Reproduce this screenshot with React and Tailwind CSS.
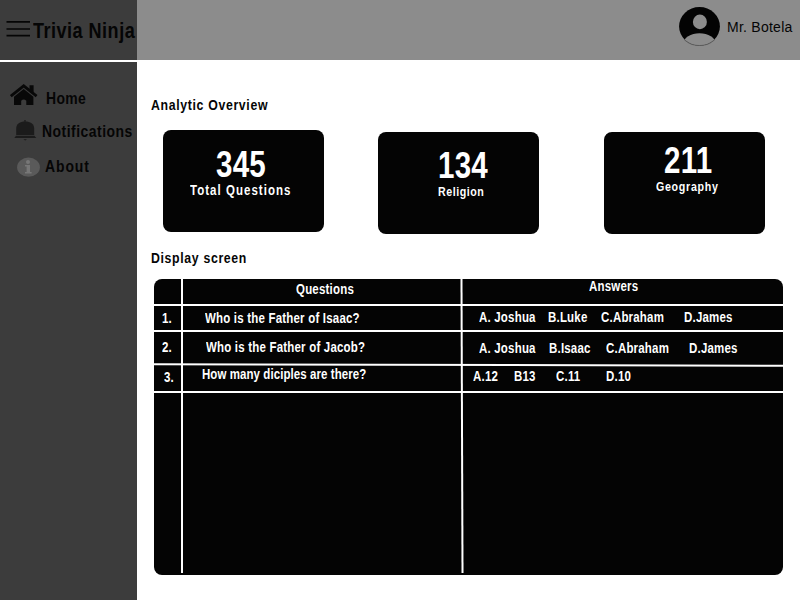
const Menu = () => (
  <svg className="block h-[18px] w-[25px] shrink-0" viewBox="0 0 25 18" stroke="#050505" strokeWidth="1.7">
    <path d="M0.5 1.8H24M0.5 9H24M0.5 15.7H24" />
  </svg>
);

const House = () => (
  <svg className="block h-[22px] w-[28px] shrink-0" viewBox="0 0 28 22">
    <path d="M0.8 12.2L13.7 1.8L26.6 12.2" fill="none" stroke="#080808" strokeWidth="2.8" />
    <path d="M19.5 1.2H23.6v9L19.5 6.5z" fill="#080808" />
    <path d="M4 12.8L13.7 5L23.4 12.8V21H16.3V16.8Q13.7 14 11.2 16.8V21H4z" fill="#080808" />
  </svg>
);

const Bell = () => (
  <svg className="block h-[23px] w-[23px] shrink-0" viewBox="0 0 23 23" fill="#1b1b1b">
    <circle cx="11" cy="1.9" r="0.9" />
    <path d="M2.2 16V9.8C2.2 4.6 6 2.4 11.2 2.4S20.2 4.6 20.2 9.8V16z" />
    <path d="M2 16.8H20.4L22.3 18.9H0.3z" />
    <path d="M9.4 20.2h3.6l-1.8 1.2z" />
  </svg>
);

const Info = () => (
  <svg className="block h-[20px] w-[24px] shrink-0" viewBox="0 0 24 20">
    <ellipse cx="12.5" cy="10.2" rx="11.4" ry="9.6" fill="#5a5a5a" />
    <circle cx="12" cy="4.9" r="2" fill="#777" />
    <path d="M9 8H14V15H15.6V16.6H9V15H10.6V9.6H9z" fill="#777" />
  </svg>
);

const Avatar = () => (
  <svg className="block h-[41px] w-[43px] shrink-0" viewBox="0 0 43 41">
    <defs>
      <clipPath id="face">
        <ellipse cx="21.5" cy="20.4" rx="20.4" ry="19.4" />
      </clipPath>
    </defs>
    <ellipse cx="21.5" cy="20.4" rx="20.4" ry="19.4" fill="#030303" />
    <ellipse cx="21.9" cy="15.9" rx="7" ry="7.3" fill="#8c8c8c" />
    <ellipse cx="21.5" cy="37.7" rx="16" ry="10.4" fill="#8c8c8c" clipPath="url(#face)" />
    <path d="M6 33.3C10 37.5 15 39.5 21.5 39.5S33 37.5 37 33.3" fill="none" stroke="#555" strokeWidth="0.7" />
  </svg>
);

/* Bold sans text condensed to narrow proportions. */
const Narrow = ({ children, className = "" }) => (
  <span className={`block origin-left scale-x-[0.82] ${className}`}>{children}</span>
);

function Card({ value, label, className, valueClass, labelClass }) {
  return (
    <div className={`flex h-[102px] w-[161px] flex-col rounded-[8px] bg-[#040404] text-white ${className}`}>
      <Narrow className={`w-[70px] text-[36px] leading-[36px] tracking-[0.3px] ${valueClass}`}>{value}</Narrow>
      <Narrow className={`w-[130px] leading-[16px] ${labelClass}`}>{label}</Narrow>
    </div>
  );
}

function Row({ className, num, numClass, question, questionClass, children, answersClass }) {
  return (
    <div className={`flex leading-[16px] ${className}`}>
      <div className={`w-[28px] shrink-0 ${numClass}`}>
        <Narrow>{num}</Narrow>
      </div>
      <div className={`w-[280px] shrink-0 ${questionClass}`}>
        <Narrow>{question}</Narrow>
      </div>
      <div className={`flex grow ${answersClass}`}>{children}</div>
    </div>
  );
}

export default function App() {
  return (
    <div className="flex h-[600px] w-[800px] overflow-hidden bg-white font-['Liberation_Sans',Arial,sans-serif] font-bold whitespace-nowrap text-[#050505]">
      <aside className="flex w-[137px] shrink-0 flex-col bg-[#3c3c3c]">
        <div className="flex h-[62px] items-start border-b-2 border-white pt-[20px] pl-[6px]">
          <Menu />
          <Narrow className="ml-[2px] w-[100px] text-[22px] leading-[22px] tracking-[0.6px]">Trivia Ninja</Narrow>
        </div>
        <nav className="flex flex-col text-[17px] leading-[20px]">
          <a className="mt-[22px] flex h-[24px] pl-[10px]">
            <House />
            <Narrow className="mt-[5px] ml-[8px] tracking-[0.4px]">Home</Narrow>
          </a>
          <a className="mt-[11px] flex h-[24px] pl-[14px]">
            <Bell />
            <Narrow className="mt-[3px] ml-[5px] w-[90px] tracking-[0.6px]">Notifications</Narrow>
          </a>
          <a className="mt-[14px] flex h-[24px] pl-[16px]">
            <Info />
            <Narrow className="ml-[5px] tracking-[1.1px]">About</Narrow>
          </a>
        </nav>
      </aside>

      <div className="flex w-[663px] flex-col">
        <header className="flex h-[60px] items-start bg-[#8c8c8c] pt-[6px] pl-[541px]">
          <Avatar />
          <span className="mt-[11px] ml-[6px] text-[14px] leading-[20px] font-normal tracking-[0.25px]">Mr. Botela</span>
        </header>

        <main className="flex flex-col">
          <h1 className="mt-[35px] ml-[14px] h-[35px] text-[15px] leading-[20px] tracking-[0.8px]">
            <Narrow>Analytic Overview</Narrow>
          </h1>
          <section className="flex h-[104px] pl-[26px]">
            <Card
              value="345"
              label="Total Questions"
              className="pt-[17px]"
              valueClass="ml-[53px]"
              labelClass="-mt-px ml-[27px] text-[14px] tracking-[1.26px]"
            />
            <Card
              value="134"
              label="Religion"
              className="mt-[2px] ml-[54px] pt-[16px]"
              valueClass="ml-[60px]"
              labelClass="ml-[60px] text-[13px] tracking-[0.65px]"
            />
            <Card
              value="211"
              label="Geography"
              className="mt-[2px] ml-[65px] pt-[11px]"
              valueClass="ml-[60px]"
              labelClass="ml-[52px] text-[13px] tracking-[0.85px]"
            />
          </section>
          <h2 className="mt-[14px] ml-[14px] h-[31px] text-[15px] leading-[20px] tracking-[0.8px]">
            <Narrow>Display screen</Narrow>
          </h2>

          <section className="relative ml-[17px] flex h-[296px] w-[629px] flex-col overflow-hidden rounded-[8px] bg-[#040404] text-[14px] tracking-[0.25px] text-white">
            <Row className="h-[25px]" question="Questions" questionClass="pt-[2px] pl-[114px]" answersClass="-mt-px pl-[127px]">
              <Narrow>Answers</Narrow>
            </Row>
            <div className="h-[2px] shrink-0 bg-white" />
            <Row className="h-[24px]" num="1." numClass="pt-[4px] pl-[8px]" question="Who is the Father of Isaac?" questionClass="pt-[4px] pl-[23px]" answersClass="pt-[3px]">
              <Narrow className="ml-[17px] w-[69px]">A. Joshua</Narrow>
              <Narrow className="w-[53px]">B.Luke</Narrow>
              <Narrow className="w-[83px]">C.Abraham</Narrow>
              <Narrow>D.James</Narrow>
            </Row>
            <div className="h-[2px] shrink-0 bg-white" />
            <Row className="h-[32px]" num="2." numClass="pt-[7px] pl-[8px]" question="Who is the Father of Jacob?" questionClass="pt-[7px] pl-[24px]" answersClass="pt-[8px]">
              <Narrow className="ml-[17px] w-[70px]">A. Joshua</Narrow>
              <Narrow className="w-[57px]">B.Isaac</Narrow>
              <Narrow className="w-[83px]">C.Abraham</Narrow>
              <Narrow>D.James</Narrow>
            </Row>
            <div className="h-[2px] shrink-0 rotate-[0.15deg] bg-white" />
            <Row className="h-[25px]" num="3." numClass="pt-[3px] pl-[10px]" question="How many diciples are there?" questionClass="pl-[20px] tracking-[0.1px]" answersClass="pt-[2px]">
              <Narrow className="ml-[11px] w-[41px]">A.12</Narrow>
              <Narrow className="w-[42px]">B13</Narrow>
              <Narrow className="w-[50px]">C.11</Narrow>
              <Narrow>D.10</Narrow>
            </Row>
            <div className="h-[2px] shrink-0 bg-white" />
            <div className="absolute top-0 left-[27px] h-[294px] w-[2px] bg-white" />
            <div className="absolute top-0 left-[307px] h-[294px] w-[2px] rotate-[-0.2deg] bg-white" />
          </section>
        </main>
      </div>
    </div>
  );
}
